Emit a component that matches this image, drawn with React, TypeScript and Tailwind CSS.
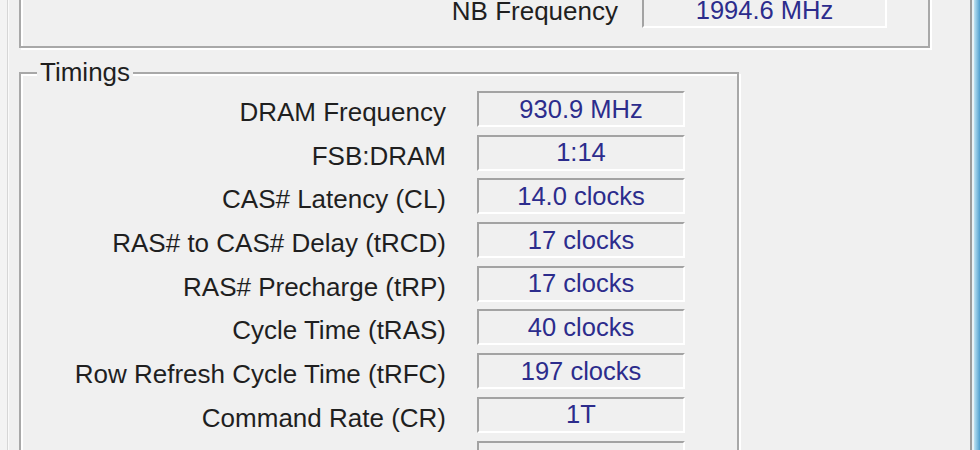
import React from 'react';

const timings: { label: string; value: string }[] = [
  { label: 'DRAM Frequency', value: '930.9 MHz' },
  { label: 'FSB:DRAM', value: '1:14' },
  { label: 'CAS# Latency (CL)', value: '14.0 clocks' },
  { label: 'RAS# to CAS# Delay (tRCD)', value: '17 clocks' },
  { label: 'RAS# Precharge (tRP)', value: '17 clocks' },
  { label: 'Cycle Time (tRAS)', value: '40 clocks' },
  { label: 'Row Refresh Cycle Time (tRFC)', value: '197 clocks' },
  { label: 'Command Rate (CR)', value: '1T' },
  { label: '', value: '' },
];

const ValueBox = ({ value, className = '' }: { value: string; className?: string }) => (
  <div
    className={`h-[36px] shrink-0 flex items-center justify-center border-t-2 border-l-2 border-b-2 border-r-2 border-t-[#a3a3a3] border-l-[#a3a3a3] border-b-white border-r-white text-[#2c2c8c] ${className}`}
  >
    {value}
  </div>
);

export default function App() {
  return (
    <div
      className="w-[980px] h-[450px] overflow-hidden flex bg-[#f0f0f0] text-[25.5px] leading-[29px] text-[#1f1f1f]"
      style={{ fontFamily: '"Liberation Sans", Arial, sans-serif' }}
    >
      {/* tab page */}
      <div className="flex-1 flex">
        <div className="w-[7px] bg-[#f3f3f3]" />
        <div className="flex-1 flex flex-col border-l border-l-[#d6d6d6] pl-[11px] shadow-[inset_1px_0_0_#fafafa]">
          {/* upper group, mostly scrolled off the top */}
          <div className="w-[911px] mt-[-60px] border-2 border-[#a8a8a8] shadow-[inset_2px_2px_0_#fff,2px_2px_0_#fff] pt-[50px] pb-[18px]">
            <div className="flex items-start h-[36px]">
              <div className="w-[597px] text-right pt-[5px] text-[26px]">NB Frequency</div>
              <ValueBox value="1994.6 MHz" className="ml-[24px] w-[245px]" />
            </div>
          </div>

          {/* Timings group */}
          <fieldset className="w-[720px] mt-[10px] border-2 border-[#a8a8a8] shadow-[inset_2px_2px_0_#fff,2px_2px_0_#fff] pt-[4px] pb-[10px]">
            <legend className="ml-[16px] px-[3px] bg-[#f0f0f0] text-[26px]">Timings</legend>
            <div className="flex flex-col gap-[7.7px]">
              {timings.map((t, i) => (
                <div key={i} className="flex items-start h-[36px]">
                  <div className="w-[425px] text-right pt-[7px] leading-[29px] whitespace-nowrap text-[26px]">{t.label}</div>
                  <ValueBox value={t.value} className="ml-[31px] w-[208px]" />
                </div>
              ))}
            </div>
          </fieldset>
        </div>
        <div className="w-[2px] bg-[#9c9c9c]" />
      </div>
      {/* window frame */}
      <div className="w-[2px] bg-[#e9f2f6]" />
      <div className="w-[6px] bg-[linear-gradient(to_right,#bfe3f2,#4f9fcf)]" />
    </div>
  );
}
